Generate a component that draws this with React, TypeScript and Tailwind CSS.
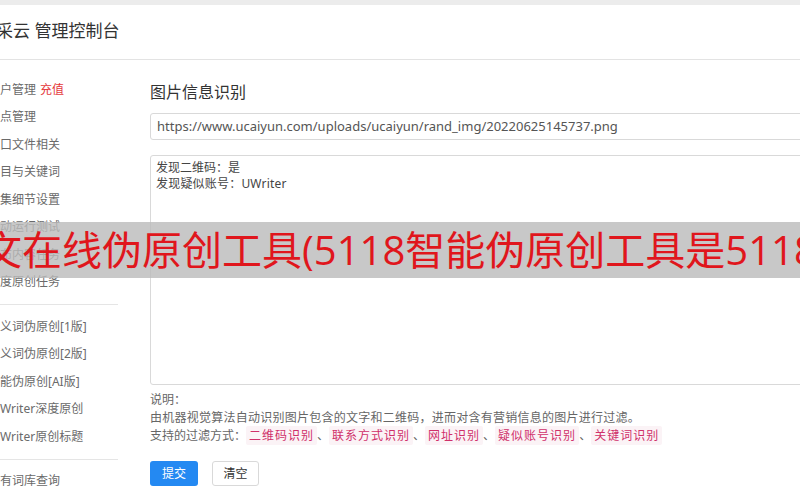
import React from "react";

const font = { fontFamily: '"Noto Sans", "Noto Sans CJK SC", sans-serif' };
const bannerFont = { fontFamily: '"Open Sans", "Noto Sans CJK SC", sans-serif' };

function SideItem({ children }: { children: React.ReactNode }) {
  return (
    <div className="h-[27.5px] flex items-center text-[12px] text-[#6a6a6a] whitespace-nowrap">
      {children}
    </div>
  );
}

function Tag({ children }: { children: React.ReactNode }) {
  return (
    <span className="bg-[#fbf3f6] text-[#d0306a] px-[3px] py-[1px] rounded-[2px] tracking-[1px]">
      {children}
    </span>
  );
}

export default function App() {
  return (
    <div
      className="relative w-[800px] h-[500px] overflow-hidden bg-white"
      style={font}
    >
      <div className="h-[5px] bg-[#ececec]" />
      <div className="h-[55px] border-b border-[#e3e3e3] flex items-center">
        <div className="ml-[-4px] mt-[-2px] text-[17px] text-[#333] whitespace-nowrap">采云 管理控制台</div>
      </div>
      <div className="flex">
        <div className="w-[118px] shrink-0 pt-[16px]">
          <SideItem>
            户管理<span className="ml-[4px] text-[#e4393c]">充值</span>
          </SideItem>
          <SideItem>点管理</SideItem>
          <SideItem>口文件相关</SideItem>
          <SideItem>目与关键词</SideItem>
          <SideItem>集细节设置</SideItem>
          <SideItem>动运行测试</SideItem>
          <SideItem>布内容任务</SideItem>
          <SideItem>度原创任务</SideItem>
          <div className="my-[8px] border-t border-[#e5e5e5]" />
          <SideItem>义词伪原创[1版]</SideItem>
          <SideItem>义词伪原创[2版]</SideItem>
          <SideItem>能伪原创[AI版]</SideItem>
          <SideItem>Writer深度原创</SideItem>
          <SideItem>Writer原创标题</SideItem>
          <div className="my-[8px] border-t border-[#e5e5e5]" />
          <SideItem>有词库查询</SideItem>
        </div>
        <div className="ml-[32px] w-[700px] shrink-0 pt-[21px]">
          <div className="text-[16px] text-[#333] leading-[22px]">图片信息识别</div>
          <div className="mt-[10px] h-[27px] border border-[#d9d9d9] rounded-[3px] flex items-center px-[6px] text-[13px] text-[#555] whitespace-nowrap">
            https://www.ucaiyun.com/uploads/ucaiyun/rand_img/20220625145737.png
          </div>
          <div className="mt-[15px] h-[230px] border border-[#d9d9d9] rounded-[3px] px-[5px] pt-[4px] text-[12px] leading-[16px] text-[#444]">
            <div>发现二维码：是</div>
            <div className="tracking-[0.2px]">发现疑似账号：UWriter</div>
          </div>
          <div className="mt-[6px] text-[12px] leading-[18px] text-[#666] whitespace-nowrap">
            <div>说明：</div>
            <div className="tracking-[0.25px]">由机器视觉算法自动识别图片包含的文字和二维码，进而对含有营销信息的图片进行过滤。</div>
            <div>
              支持的过滤方式：<Tag>二维码识别</Tag>、<Tag>联系方式识别</Tag>、<Tag>网址识别</Tag>、
              <Tag>疑似账号识别</Tag>、<Tag>关键词识别</Tag>
            </div>
          </div>
          <div className="mt-[16px] flex gap-[14px]">
            <button className="w-[48px] h-[25px] rounded-[3px] bg-[#2489f2] text-white text-[12px]">提交</button>
            <button className="w-[47px] h-[25px] rounded-[3px] border border-[#d9d9d9] bg-white text-[#333] text-[12px]">清空</button>
          </div>
        </div>
      </div>
      <div className="absolute left-0 right-0 top-[222px] h-[56px] bg-[rgba(186,186,186,0.8)] flex items-center overflow-hidden">
        <div
          className="ml-[-18px] text-[40px] leading-none text-[#e0161c] whitespace-nowrap"
          style={bannerFont}
        >
          文在线伪原创工具(5118智能伪原创工具是5118
        </div>
      </div>
    </div>
  );
}
